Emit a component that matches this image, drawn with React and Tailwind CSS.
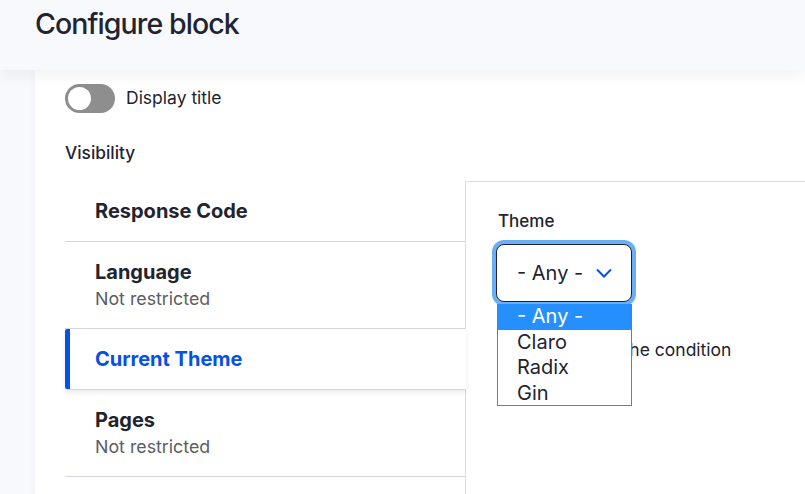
import { useState } from 'react'

// ── Toggle switch ─────────────────────────────────────────────
function Toggle({ on = false }) {
  return (
    <span
      className={`flex items-center w-[50px] h-[29px] rounded-full px-[3px] shrink-0 ${
        on ? 'bg-[#0550e6] justify-end' : 'bg-[#8e8e8e] justify-start'
      }`}
    >
      <span className="w-[23px] h-[23px] rounded-full bg-white" />
    </span>
  )
}

const TABS = [
  { key: 'response', title: 'Response Code' },
  { key: 'language', title: 'Language', summary: 'Not restricted' },
  { key: 'theme', title: 'Current Theme' },
  { key: 'pages', title: 'Pages', summary: 'Not restricted' },
]

const THEMES = ['- Any -', 'Claro', 'Radix', 'Gin']

function TabItem({ tab, active }) {
  if (active) {
    return (
      <div className="relative z-10 -mr-px bg-white border-b border-[#d4d5da] pl-[30px] pt-[17px] pb-[16px] rounded-l-[3px] shadow-[0_3px_5px_rgba(0,0,0,0.08)]">
        <span className="absolute left-0 top-0 bottom-0 w-[5px] bg-[#0550e6] rounded-l-[2px]" />
        <p className="text-[20px] leading-[27px] font-bold text-[#0550e6]">{tab.title}</p>
      </div>
    )
  }
  return (
    <div className="border-b border-[#d4d5da] pl-[30px] pt-[17px] pb-[16px]">
      <p className="text-[20px] leading-[27px] font-bold text-[#222330]">{tab.title}</p>
      {tab.summary && (
        <p className="text-[17.8px] leading-[26px] text-[#5b5c66]">{tab.summary}</p>
      )}
    </div>
  )
}

export default function App() {
  const [theme] = useState('- Any -')

  return (
    <div className="w-[805px] h-[494px] overflow-hidden bg-[#f8f9fc] font-['Inter','Liberation_Sans',sans-serif] flex flex-col">
      {/* Header */}
      <div className="relative z-20 h-[70px] shrink-0 bg-[#f7f9fd] px-[35px] pt-[5px] shadow-[0_6px_14px_rgba(0,0,0,0.05)]">
        <h1 className="text-[28.5px] leading-[38px] font-medium tracking-[-0.9px] text-[#222330]">
          Configure block
        </h1>
      </div>

      {/* Body */}
      <div className="flex flex-1 min-h-0">
        <div className="w-[35px] shrink-0" />
        <div className="flex-1 bg-white pl-[30px] pt-[14px] shadow-[-2px_0_6px_rgba(0,0,0,0.03)] flex flex-col">
          {/* Display title */}
          <label className="flex items-center gap-[11px]">
            <Toggle />
            <span className="text-[17.5px] text-[#222330]">Display title</span>
          </label>

          <p className="mt-[28px] text-[17.3px] leading-[24px] font-medium text-[#222330]">Visibility</p>

          {/* Vertical tabs */}
          <div className="mt-[16px] flex flex-1">
            <div className="w-[400px] shrink-0">
              {TABS.map((tab) => (
                <TabItem key={tab.key} tab={tab} active={tab.key === 'theme'} />
              ))}
            </div>

            <div className="flex-1 border-l border-t border-[#dcdde1] pl-[32px] pt-[28px]">
              <p className="text-[17px] leading-[22px] font-medium text-[#222330]">Theme</p>

              <div className="relative mt-[8px] w-[144px] -ml-[6px]">
                {/* Select with focus ring */}
                <div className="rounded-[12px] p-[4px] bg-[#6aaef5]">
                  <div className="h-[58px] rounded-[8px] border border-[#222330] bg-white flex items-center pl-[20px] pr-[18px] justify-between">
                    <span className="text-[20px] text-[#222330]">{theme}</span>
                    <svg width="18" height="10" viewBox="0 0 18 10" fill="none">
                      <path d="M2 1.5 L9 8.5 L16 1.5" stroke="#0550e6" strokeWidth="2" />
                    </svg>
                  </div>
                </div>

                {/* Open option list */}
                <ul className="absolute z-10 left-[5px] top-[64px] w-[135px] h-[102px] bg-white border border-[#7a7a7a] border-t-0 overflow-hidden">
                  {THEMES.map((t) => (
                    <li
                      key={t}
                      className={`h-[25.5px] pl-[19px] text-[20px] leading-[25.5px] ${
                        t === theme ? 'bg-[#2590fd] text-white' : 'text-[#222330]'
                      }`}
                    >
                      {t}
                    </li>
                  ))}
                </ul>
              </div>

              {/* Negate */}
              <label className="mt-[30px] flex items-center gap-[11px]">
                <Toggle />
                <span className="text-[17.5px] text-[#222330]">Negate the condition</span>
              </label>
            </div>
          </div>
        </div>
      </div>
    </div>
  )
}
